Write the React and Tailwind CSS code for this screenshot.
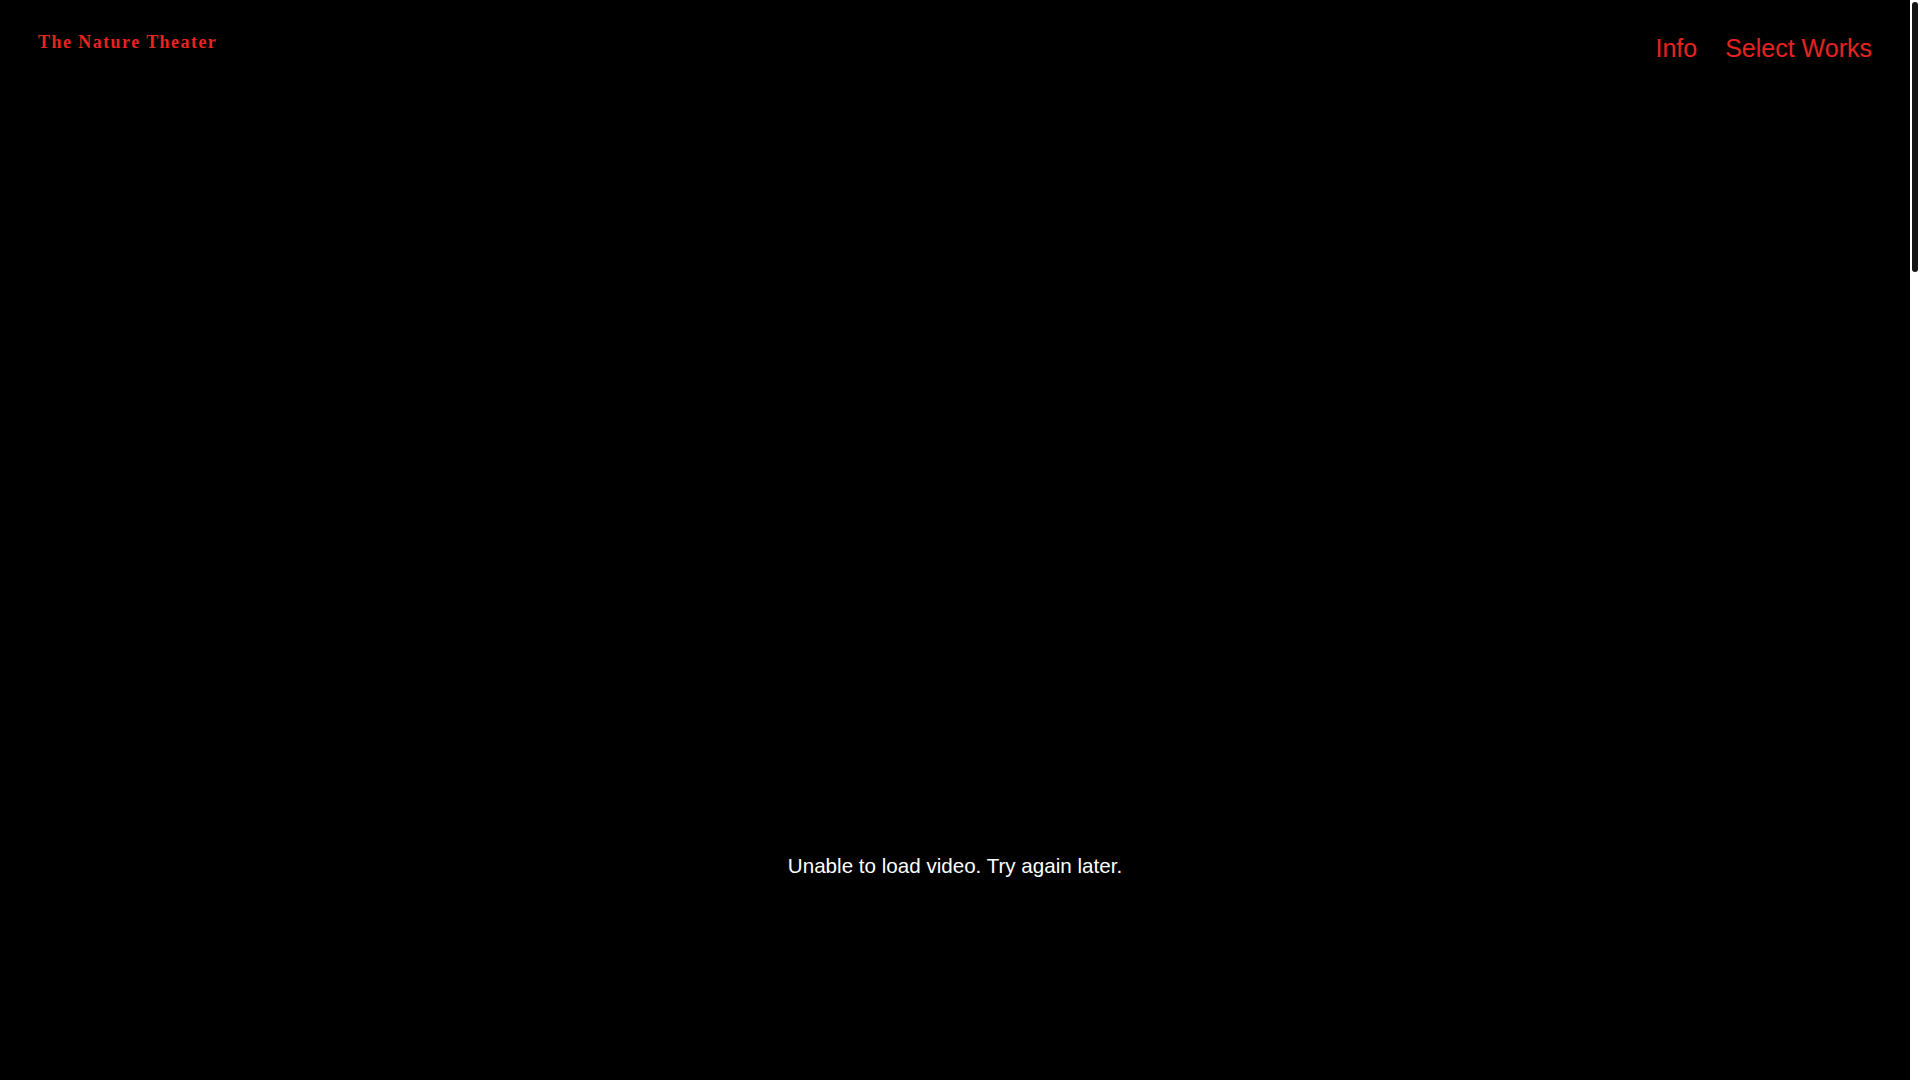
export default function App() {
  return (
    <div className="flex h-screen w-full overflow-hidden bg-black">
      <div className="h-full flex-1 overflow-hidden">
        <header className="flex items-start justify-between px-[38px] pt-[32px]">
          <a
            className="text-[18px] leading-[20px] font-bold tracking-[0.08em] text-[#e52420]"
            style={{ fontFamily: '"Liberation Serif", "Times New Roman", serif' }}
          >
            The Nature Theater
          </a>
          <nav
            className="mt-[2px] flex gap-[28px] text-[25px] leading-[28px] text-[#e52420]"
            style={{ fontFamily: '"Liberation Sans", Arial, sans-serif' }}
          >
            <a>Info</a>
            <a>Select Works</a>
          </nav>
        </header>
        <main>
          <section className="flex h-[1607px] items-center justify-center">
            <p
              className="text-[20.6px] leading-[24px] text-white"
              style={{ fontFamily: '"Liberation Sans", Arial, sans-serif' }}
            >
              Unable to load video. Try again later.
            </p>
          </section>
        </main>
      </div>
      <div className="h-full w-[10px] shrink-0 bg-white px-[2px] pt-[2px]">
        <div className="h-[270px] w-[6px] rounded-full bg-[#141414]"></div>
      </div>
    </div>
  );
}
